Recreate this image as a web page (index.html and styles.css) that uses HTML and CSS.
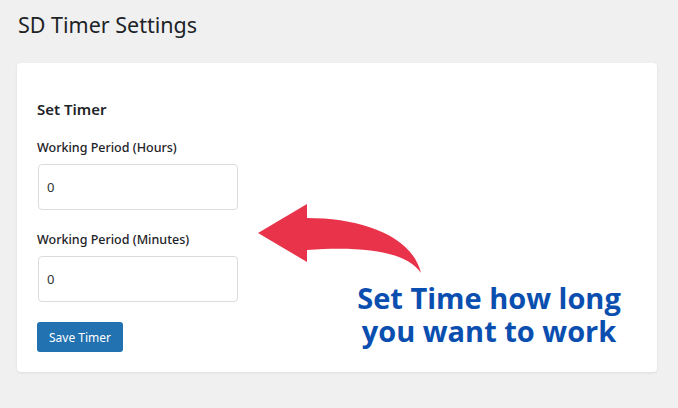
FILE: index.html
```html
<!DOCTYPE html>
<html>
<head>
<meta charset="utf-8">
<link rel="stylesheet" href="styles.css">
</head>
<body>
<div class="wrap">
  <h1 class="title">SD Timer Settings</h1>
  <div class="card">
    <h2 class="card-title">Set Timer</h2>
    <div class="field">
      <label class="label">Working Period (Hours)</label>
      <input class="input" type="text" value="0">
    </div>
    <div class="field">
      <label class="label">Working Period (Minutes)</label>
      <input class="input" type="text" value="0">
    </div>
    <button class="btn">Save Timer</button>
    <svg class="arrow" viewBox="258 204 165 72" width="165" height="72">
      <path d="M258 233 L307 204 L307 218 C362 218 412 236 421 273 C406 251 362 246 307 250 L307 262 Z" fill="#e8334a"/>
    </svg>
    <div class="callout">
      <div class="callout-line">Set Time how long</div>
      <div class="callout-line">you want to work</div>
    </div>
  </div>
</div>
</body>
</html>
```
FILE: styles.css
```css
html, body { margin: 0; padding: 0; }
body {
  background: #f0f0f1;
  font-family: "Noto Sans", "Open Sans", sans-serif;
  color: #1d2327;
  width: 678px;
  height: 408px;
  overflow: hidden;
}
.wrap { padding: 9px 21px 0 17px; }
.title {
  margin: 0 0 0 1px;
  font-size: 21.5px;
  font-weight: 400;
  line-height: 32px;
  color: #1d2327;
}
.card {
  position: relative;
  margin-top: 22px;
  background: #fff;
  border-radius: 4px;
  box-shadow: 0 1px 3px rgba(0,0,0,0.08);
  height: 309px;
  box-sizing: border-box;
  padding: 35px 20px 0 20px;
}
.card-title {
  margin: 0 0 19px 0;
  font-size: 15px;
  font-weight: 600;
  line-height: 22px;
}
.field { display: flex; flex-direction: column; margin-bottom: 21px; }
.field + .field { margin-bottom: 20px; }
.label {
  font-size: 12.5px;
  font-weight: 500;
  line-height: 18px;
  margin-bottom: 7px;
}
.input {
  width: 200px;
  height: 46px;
  box-sizing: border-box;
  margin-left: 1px;
  border: 1px solid #dcdcde;
  border-radius: 4px;
  padding: 0 8px;
  font-family: inherit;
  font-size: 13px;
  color: #2c3338;
  outline: none;
}
.btn {
  display: block;
  width: 86px;
  height: 30px;
  background: #2271b1;
  color: #fff;
  border: 0;
  border-radius: 3px;
  font-family: inherit;
  font-size: 12px;
  padding: 0;
}
.arrow { position: absolute; left: 241px; top: 141px; }
.callout {
  position: absolute;
  left: 319px;
  top: 218px;
  width: 306px;
  text-align: center;
  color: #0a4fb0;
  font-family: "Open Sans", sans-serif;
  font-weight: 700;
  font-size: 29px;
}
.callout-line { line-height: 33px; height: 33px; }
```
